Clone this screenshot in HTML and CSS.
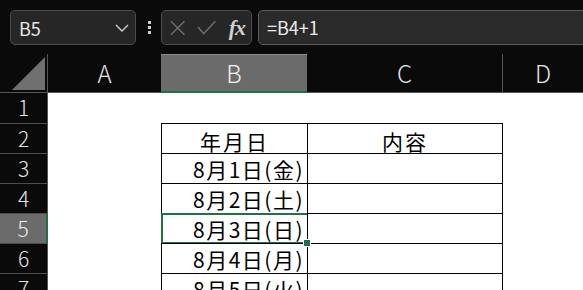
FILE: index.html
```html
<!DOCTYPE html>
<html lang="ja">
<head>
    <meta charset="UTF-8">
    <title>Sheet</title>
    <link rel="stylesheet" href="styles.css">
</head>
<body>
    <div class="app">
        <div class="toolbar">
            <div class="namebox">
                <span>B5</span>
                <svg class="chevron" width="14" height="8" viewBox="0 0 14 8"><path d="M1 1l6 6 6-6" fill="none" stroke="#d0d0d0" stroke-width="1.4"/></svg>
            </div>
            <div class="grip"><i></i><i></i><i></i></div>
            <div class="fxbox">
                <svg width="16" height="16" viewBox="0 0 16 16"><path d="M1 1l14 14M15 1L1 15" stroke="#6f6f6f" stroke-width="1.5"/></svg>
                <svg width="20" height="15" viewBox="0 0 20 15"><path d="M1 7l6 7L19 1" fill="none" stroke="#6f6f6f" stroke-width="1.5"/></svg>
                <span class="fx">fx</span>
            </div>
            <div class="formula">=B4+1</div>
        </div>

        <div class="sheet">
            <div class="corner"><div class="tri"></div></div>
            <div class="colhead">A</div>
            <div class="colhead active">B</div>
            <div class="colhead sep">C</div>
            <div class="colhead">D</div>

            <div class="rowhead first">1</div>
            <div class="cell"></div><div class="cell"></div><div class="cell"></div><div class="cell"></div>

            <div class="rowhead">2</div>
            <div class="cell"></div>
            <div class="cell tb center">年月日</div>
            <div class="cell tb last center">内容</div>
            <div class="cell"></div>

            <div class="rowhead">3</div>
            <div class="cell"></div>
            <div class="cell tb right">8月1日(金)</div>
            <div class="cell tb last"></div>
            <div class="cell"></div>

            <div class="rowhead">4</div>
            <div class="cell"></div>
            <div class="cell tb right">8月2日(土)</div>
            <div class="cell tb last"></div>
            <div class="cell"></div>

            <div class="rowhead active">5</div>
            <div class="cell"></div>
            <div class="cell tb right selected">8月3日(日)</div>
            <div class="cell tb last"></div>
            <div class="cell"></div>

            <div class="rowhead">6</div>
            <div class="cell"></div>
            <div class="cell tb right">8月4日(月)</div>
            <div class="cell tb last"></div>
            <div class="cell"></div>

            <div class="rowhead">7</div>
            <div class="cell"></div>
            <div class="cell tb right">8月5日(火)</div>
            <div class="cell tb last"></div>
            <div class="cell"></div>
        </div>
    </div>
</body>
</html>
```

FILE: styles.css
```css
* {
    box-sizing: border-box;
}
body {
    margin: 0;
    background-color: #0a0a0a;
    font-family: "Noto Sans CJK JP", "Noto Sans", sans-serif;
}
.app {
    width: 583px;
    height: 290px;
    overflow: hidden;
}
.toolbar {
    display: flex;
    align-items: center;
    height: 54px;
    padding: 1px 0 0 10px;
}
.namebox {
    display: flex;
    align-items: center;
    justify-content: space-between;
    width: 126px;
    height: 35px;
    padding: 0 6px 0 8px;
    background-color: #262626;
    border: 1px solid #4c4c4c;
    border-radius: 5px;
    color: #e6e6e6;
    font-size: 18px;
}
.grip {
    display: flex;
    flex-direction: column;
    gap: 2px;
    margin: 0 10px 0 12px;
}
.grip i {
    width: 3px;
    height: 3px;
    background-color: #cfcfcf;
}
.fxbox {
    display: flex;
    align-items: center;
    width: 91px;
    height: 35px;
    padding: 0 6px 0 8px;
    gap: 12px;
    background-color: #262626;
    border: 1px solid #4c4c4c;
    border-radius: 5px;
}
.fx {
    margin-left: auto;
    color: #d0d0d0;
    font-family: "Liberation Serif", serif;
    font-style: italic;
    font-weight: bold;
    font-size: 22px;
    letter-spacing: -1px;
}
.formula {
    flex: 1;
    height: 35px;
    margin: 0 -6px 0 6px;
    padding-left: 8px;
    line-height: 33px;
    background-color: #2a2a2a;
    border: 1px solid #5c5c5c;
    border-radius: 5px;
    color: #ededed;
    font-size: 18px;
}

.sheet {
    display: grid;
    grid-template-columns: 48px 113px 146px 196px 1fr;
    grid-template-rows: 39px repeat(7, 30px);
}
.corner {
    display: flex;
    align-items: flex-end;
    justify-content: flex-end;
    padding: 0 2px 2px 0;
    border-right: 1px solid #555;
    border-bottom: 1px solid #555;
}
.tri {
    width: 33px;
    height: 33px;
    background-color: #707070;
    clip-path: polygon(100% 0, 100% 100%, 0 100%);
}
.colhead {
    display: flex;
    align-items: center;
    justify-content: center;
    padding-bottom: 1px;
    border-bottom: 1px solid #555;
    color: #e4e4e4;
    font-size: 24px;
    font-weight: 300;
}
.colhead.active {
    background-color: #6b6b6b;
    border-top: 1px solid #8a8a8a;
    border-bottom: 2px solid #1f7244;
    color: #f2f2f2;
}
.colhead.sep {
    border-right: 1px solid #555;
}
.rowhead {
    display: flex;
    justify-content: center;
    padding-top: 2px;
    border-top: 1px solid #4d4d4d;
    border-right: 1px solid #555;
    color: #e4e4e4;
    font-size: 21px;
    font-weight: 300;
    line-height: 24px;
}
.rowhead.first {
    border-top: none;
}
.rowhead.active {
    background-color: #6b6b6b;
    border-right: 2px solid #1f7244;
    color: #f2f2f2;
}
.cell {
    position: relative;
    background-color: #fff;
    color: #000;
    font-size: 21px;
    line-height: 30px;
    white-space: nowrap;
}
.tb {
    border-top: 1px solid #000;
    border-left: 1px solid #000;
}
.tb.last {
    border-right: 1px solid #000;
}
.center {
    text-align: center;
    letter-spacing: 2px;
    padding-top: 2px;
}
.right {
    text-align: right;
    padding-right: 3px;
    letter-spacing: 1.5px;
}
.selected::after {
    content: "";
    position: absolute;
    top: -1px;
    left: -1px;
    right: -2px;
    bottom: -1px;
    border: 2px solid #1f7244;
}
.selected::before {
    content: "";
    position: absolute;
    right: -4px;
    bottom: -4px;
    width: 6px;
    height: 6px;
    background-color: #1f7244;
    border: 1px solid #fff;
    z-index: 1;
}
```
